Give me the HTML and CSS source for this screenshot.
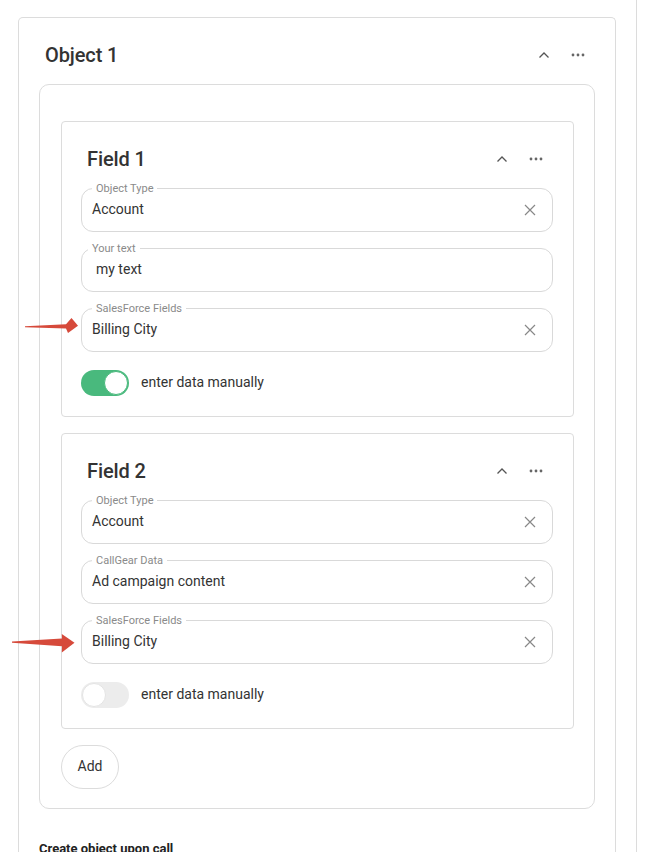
FILE: index.html
```html
<!DOCTYPE html>
<html lang="en">
<head>
<meta charset="utf-8">
<title>Object 1</title>
<link rel="stylesheet" href="styles.css">
</head>
<body>
<div class="page">
  <section class="card">
    <header class="card-head">
      <h2 class="title">Object 1</h2>
      <div class="actions">
        <button class="icon-btn" aria-label="collapse"><svg width="12" height="8" viewBox="0 0 12 8"><path d="M1.5 6.5 L6 2 L10.5 6.5" fill="none" stroke="#555" stroke-width="1.3"/></svg></button>
        <button class="icon-btn" aria-label="more"><svg width="16" height="4" viewBox="0 0 16 4"><circle cx="3" cy="2" r="1.4" fill="#666"/><circle cx="8" cy="2" r="1.4" fill="#666"/><circle cx="13" cy="2" r="1.4" fill="#666"/></svg></button>
      </div>
    </header>

    <div class="group">
      <div class="field-card">
        <header class="field-head">
          <h3 class="title">Field 1</h3>
          <div class="actions">
            <button class="icon-btn" aria-label="collapse"><svg width="12" height="8" viewBox="0 0 12 8"><path d="M1.5 6.5 L6 2 L10.5 6.5" fill="none" stroke="#555" stroke-width="1.3"/></svg></button>
            <button class="icon-btn" aria-label="more"><svg width="16" height="4" viewBox="0 0 16 4"><circle cx="3" cy="2" r="1.4" fill="#666"/><circle cx="8" cy="2" r="1.4" fill="#666"/><circle cx="13" cy="2" r="1.4" fill="#666"/></svg></button>
          </div>
        </header>
        <div class="inputs">
          <div class="input">
            <span class="label">Object Type</span>
            <span class="value">Account</span>
            <svg class="clear" width="12" height="12" viewBox="0 0 12 12"><path d="M1 1 L11 11 M11 1 L1 11" stroke="#888" stroke-width="1.2"/></svg>
          </div>
          <div class="input">
            <span class="label label-tight">Your text</span>
            <span class="value value-text">my text</span>
          </div>
          <div class="input">
            <span class="label">SalesForce Fields</span>
            <span class="value">Billing City</span>
            <svg class="clear" width="12" height="12" viewBox="0 0 12 12"><path d="M1 1 L11 11 M11 1 L1 11" stroke="#888" stroke-width="1.2"/></svg>
          </div>
        </div>
        <div class="toggle-row">
          <span class="toggle on"><span class="knob"></span></span>
          <span class="toggle-text">enter data manually</span>
        </div>
      </div>

      <div class="field-card">
        <header class="field-head">
          <h3 class="title">Field 2</h3>
          <div class="actions">
            <button class="icon-btn" aria-label="collapse"><svg width="12" height="8" viewBox="0 0 12 8"><path d="M1.5 6.5 L6 2 L10.5 6.5" fill="none" stroke="#555" stroke-width="1.3"/></svg></button>
            <button class="icon-btn" aria-label="more"><svg width="16" height="4" viewBox="0 0 16 4"><circle cx="3" cy="2" r="1.4" fill="#666"/><circle cx="8" cy="2" r="1.4" fill="#666"/><circle cx="13" cy="2" r="1.4" fill="#666"/></svg></button>
          </div>
        </header>
        <div class="inputs">
          <div class="input">
            <span class="label">Object Type</span>
            <span class="value">Account</span>
            <svg class="clear" width="12" height="12" viewBox="0 0 12 12"><path d="M1 1 L11 11 M11 1 L1 11" stroke="#888" stroke-width="1.2"/></svg>
          </div>
          <div class="input">
            <span class="label">CallGear Data</span>
            <span class="value">Ad campaign content</span>
            <svg class="clear" width="12" height="12" viewBox="0 0 12 12"><path d="M1 1 L11 11 M11 1 L1 11" stroke="#888" stroke-width="1.2"/></svg>
          </div>
          <div class="input">
            <span class="label">SalesForce Fields</span>
            <span class="value">Billing City</span>
            <svg class="clear" width="12" height="12" viewBox="0 0 12 12"><path d="M1 1 L11 11 M11 1 L1 11" stroke="#888" stroke-width="1.2"/></svg>
          </div>
        </div>
        <div class="toggle-row">
          <span class="toggle"><span class="knob"></span></span>
          <span class="toggle-text">enter data manually</span>
        </div>
      </div>

      <button class="add-btn">Add</button>
    </div>

    <p class="section-title">Create object upon call</p>
  </section>

  <svg class="arrows" width="655" height="852" viewBox="0 0 655 852">
    <path d="M25 326.2 L66 324.2 L71.5 318 L78 325.8 L68 333 L66 328.6 L25 327.2 Z" fill="#d64a3b"/>
    <path d="M12 641.6 L62 638.6 L61.8 634 L74.5 642.7 L61.8 652.6 L62 646.2 L12 642.8 Z" fill="#d64a3b"/>
  </svg>
</div>
</body>
</html>
```

FILE: styles.css
```css
* { box-sizing: border-box; }

html, body {
  margin: 0;
  padding: 0;
  background: #fff;
}

body {
  font-family: Roboto, "Liberation Sans", Arial, sans-serif;
  color: #333;
  overflow: hidden;
}

.page {
  position: relative;
  width: 637px;
  height: 852px;
  padding: 17px 20px 0 18px;
  border-right: 1px solid #dcdcdc;
}

.card {
  border: 1px solid #dcdcdc;
  border-bottom: none;
  border-radius: 5px 5px 0 0;
  padding: 17px 20px 0 20px;
  height: 835px;
}

.card-head {
  display: flex;
  align-items: center;
  justify-content: space-between;
  height: 40px;
  margin-bottom: 9px;
  padding-left: 6px;
  padding-right: 5px;
}

.title {
  margin: 0;
  font-size: 20px;
  font-weight: 500;
  color: #333;
  letter-spacing: -0.1px;
}

.actions {
  display: flex;
  gap: 10px;
}

.icon-btn {
  width: 24px;
  height: 24px;
  padding: 0;
  border: none;
  background: none;
  display: flex;
  align-items: center;
  justify-content: center;
}

.group {
  border: 1px solid #dcdcdc;
  border-radius: 10px;
  padding: 36px 20px 19px 21px;
  display: flex;
  flex-direction: column;
  align-items: flex-start;
  gap: 16px;
}

.field-card {
  width: 100%;
  border: 1px solid #dcdcdc;
  border-radius: 4px;
  padding: 18px 20px 20px 19px;
}

.field-head {
  display: flex;
  align-items: center;
  justify-content: space-between;
  height: 38px;
  margin-bottom: 10px;
  padding-left: 6px;
  padding-right: 5px;
}

.inputs {
  display: flex;
  flex-direction: column;
  gap: 16px;
}

.input {
  position: relative;
  height: 44px;
  border: 1px solid #d9d9d9;
  border-radius: 12px;
  display: flex;
  align-items: center;
  padding: 0 16px 2px 10px;
}

.label {
  position: absolute;
  top: -7px;
  left: 10px;
  padding: 0 4px;
  background: #fff;
  font-size: 11px;
  line-height: 14px;
  color: #8a8a8a;
}

.label.label-tight {
  left: 6px;
}

.value {
  flex: 1;
  font-size: 14px;
  color: #333;
}

.value.value-text {
  padding-left: 4px;
}

.clear {
  flex: none;
  margin-top: 2px;
}

.toggle-row {
  display: flex;
  align-items: center;
  gap: 12px;
  margin-top: 18px;
  height: 26px;
}

.toggle {
  position: relative;
  width: 48px;
  height: 26px;
  border-radius: 13px;
  background: #ececec;
  display: flex;
  align-items: center;
  padding: 1px;
}

.toggle .knob {
  width: 24px;
  height: 24px;
  border-radius: 50%;
  background: #fff;
  border: 1px solid #e4e4e4;
}

.toggle.on {
  background: #49b97d;
  justify-content: flex-end;
}

.toggle.on .knob {
  border: 1.5px solid #49b97d;
}

.toggle-text {
  font-size: 14px;
  color: #333;
  padding-bottom: 3px;
}

.add-btn {
  width: 58px;
  height: 44px;
  border: 1px solid #dcdcdc;
  border-radius: 22px;
  background: #fff;
  font-family: Roboto, "Liberation Sans", Arial, sans-serif;
  font-size: 14px;
  color: #333;
  padding: 0 0 2px 0;
}

.section-title {
  margin: 30px 0 0 0;
  font-size: 13px;
  line-height: 20px;
  font-weight: 700;
  color: #222;
}

.arrows {
  position: absolute;
  left: 0;
  top: 0;
  pointer-events: none;
}
```
